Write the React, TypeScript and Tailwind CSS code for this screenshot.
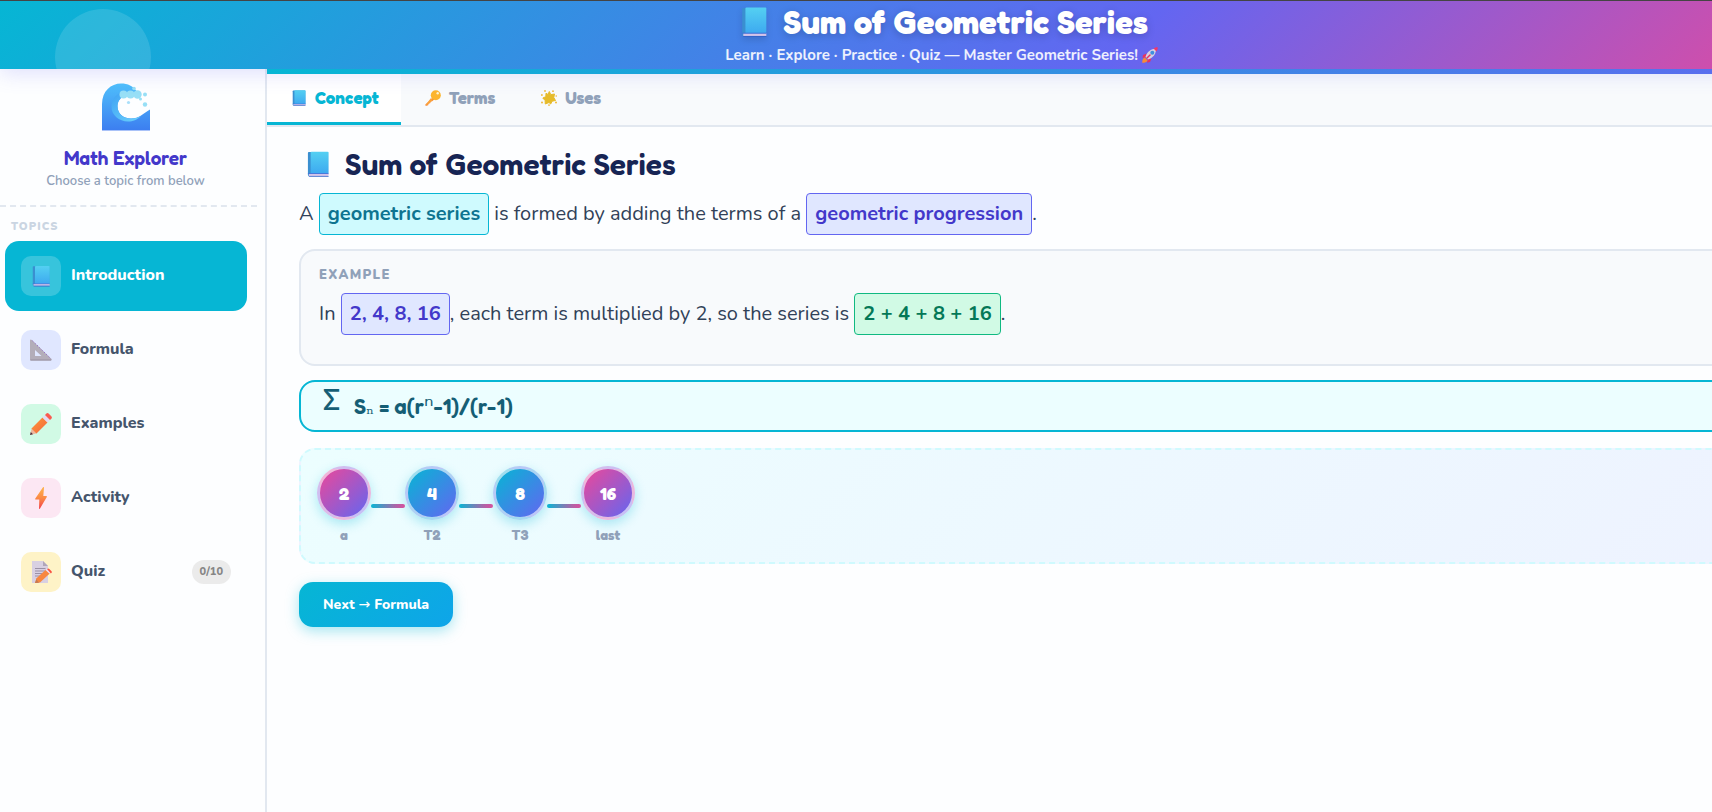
import type { ReactNode } from "react";

const display = "font-['Fredoka_One','Fredoka','Lato',sans-serif]";

function Book({ className = "" }: { className?: string }) {
  return (
    <svg viewBox="0 0 24 28" className={className} aria-hidden="true">
      <defs>
        <linearGradient id="bookCover" x1="0" y1="0" x2="0" y2="1">
          <stop offset="0" stopColor="#54d0f2" />
          <stop offset="1" stopColor="#3da9f0" />
        </linearGradient>
      </defs>
      <rect x="1" y="1" width="22" height="26" rx="1" fill="#3a8fd0" />
      <rect x="4" y="0.5" width="19.5" height="24" rx="1" fill="url(#bookCover)" />
      <path d="M2 24.500h21.500v2.500H2z" fill="#d5c3ea" />
      <path d="M1.500 27h22v1h-21z" fill="#3464c8" />
      <path d="M1 24h22.500v.9H1z" fill="#3f6fd8" />
    </svg>
  );
}

function Wave({ className = "" }: { className?: string }) {
  return (
    <svg viewBox="0 0 48 48" className={className} aria-hidden="true">
      <defs>
        <linearGradient id="waveBody" x1="0" y1="0" x2="0" y2="1">
          <stop offset="0" stopColor="#4fc0fb" />
          <stop offset="1" stopColor="#3c7df0" />
        </linearGradient>
        <linearGradient id="waveCurl" x1="0" y1="0" x2="1" y2="1">
          <stop offset="0" stopColor="#3fa2f3" />
          <stop offset="1" stopColor="#6bd2fc" />
        </linearGradient>
      </defs>
      <path d="M0 48V21C0 8 9 .5 19 .5c7 0 12 2.500 15.500 7.500L31 12c-3-1-6-1-8 0-4.500 2-7.500 6-7.500 11C15.500 30.500 21 35.500 29 35.500c8 0 12.500-5 19-9V48z" fill="url(#waveBody)" />
      <path d="M20 9c-7 2.500-10.500 8-10.500 15C9.500 32 17 38.500 26 38.500c5 0 9-1.500 13-5.500-3 1.700-6 2.500-10 2.500-8.500 0-13.500-5-13.500-12.500 0-4 2-7 5.500-9.500z" fill="url(#waveCurl)" />
      <path d="M0 47h48v1H0z" fill="#a9c2f8" />
      <g fill="#97dff6">
        <circle cx="21.500" cy="11.500" r="4" />
        <circle cx="28.500" cy="11.500" r="4" />
        <circle cx="35.500" cy="11.500" r="4.200" />
        <circle cx="32" cy="5.500" r="1.800" />
        <circle cx="38.500" cy="16" r="1.500" />
        <circle cx="43" cy="11.500" r="2" />
        <circle cx="43" cy="21.500" r="2.200" />
      </g>
      <circle cx="26.500" cy="19.500" r="1.600" fill="#a8dffa" />
    </svg>
  );
}

function Ruler() {
  return (
    <svg viewBox="0 0 22 22" className="size-[22px]" aria-hidden="true">
      <path fillRule="evenodd" d="M0 1.500C0 .3 1 .2 1.800 1L21.500 20c.7.800.4 1.500-.5 1.500H1c-.6 0-1-.4-1-1zM5 11v6h6.500z" fill="#b3adb9" />
      <path d="M2.500 1.800l18.500 18" stroke="#8d62c4" strokeWidth="1" strokeDasharray="1.200 2" />
      <path d="M.5 21h20.500" stroke="#968fa0" />
    </svg>
  );
}

function Pencil() {
  return (
    <svg viewBox="0 0 22 22" className="size-[22px]" aria-hidden="true">
      <defs>
        <linearGradient id="pencilBody" x1="0" y1="0" x2="1" y2="1">
          <stop offset="0" stopColor="#ff9838" />
          <stop offset="1" stopColor="#f2663f" />
        </linearGradient>
      </defs>
      <path d="M0 22l1.800-7L7 20.300z" fill="#eeb69c" />
      <path d="M0 22l.8-3 2.200 2.200z" fill="#4a3340" />
      <path d="M1.500 15.500L12.500 4.500l5 5L6.500 20.500z" fill="url(#pencilBody)" />
      <path d="M12.500 4.500L15 2l5 5-2.500 2.500z" fill="#e5d9f2" />
      <path d="M15 2l1.200-1.300c.8-.8 1.800-.8 2.600 0l2.500 2.500c.8.800.8 1.800 0 2.600L20 7z" fill="#fa5a50" />
    </svg>
  );
}

function Bolt() {
  return (
    <svg viewBox="0 0 12 22" className="h-[22px] w-3" aria-hidden="true">
      <defs>
        <linearGradient id="boltFill" x1="0" y1="0" x2="0" y2="1">
          <stop offset="0" stopColor="#fdb44b" />
          <stop offset=".5" stopColor="#fb8a45" />
          <stop offset="1" stopColor="#f2404b" />
        </linearGradient>
      </defs>
      <path d="M8 .3L.3 11.500c-.4.600 0 1 .5 1h3.500L4 21.500c0 .6.600.7 1 .1L11.800 10c.3-.6 0-1-.6-1H8.300L9 .7C9 0 8.400-.2 8 .3z" fill="url(#boltFill)" />
    </svg>
  );
}

function Memo() {
  return (
    <svg viewBox="0 0 22 22" className="size-[22px]" aria-hidden="true">
      <path d="M2 0h11l5 5v17H2z" fill="#d8d0e2" />
      <path d="M13 0l5 5h-5z" fill="#b0a6ba" />
      <path d="M5 7.500h10.500M5 10h10.500M5 12.500h8M5 15h6" stroke="#9a90a6" strokeWidth="1" />
      <path d="M5 22l1.500-4.800L16 8.500l4 3.800L10 21.500z" fill="#f7873f" />
      <path d="M15.500 9l1.600-1.500 4 3.800-1.600 1.500z" fill="#ece3f5" />
      <path d="M17 8c.8-.7 1.600-.7 2.300 0l2 1.900c.7.700.7 1.500 0 2.200l-.4.300z" fill="#f9503f" />
      <path d="M5 22l1.300-3.800 2.700 3.500z" fill="#c47a52" />
    </svg>
  );
}

function Key() {
  return (
    <svg viewBox="0 0 16 16" className="size-4" aria-hidden="true">
      <path d="M8 7.500L.6 14.200c-.6.800-.2 1.800.8 1.600l1.800-.5.400-1.800 1.600-.2.400-1.800 1.600-.2 2.600-2.300z" fill="#f58a3c" />
      <circle cx="10.800" cy="5.200" r="5" fill="#fcb52e" />
      <path d="M6 8l2 2-6.500 5.500-.7-.7z" fill="#fba23b" />
      <circle cx="12.700" cy="3.300" r="1.200" fill="#fff3cf" />
    </svg>
  );
}

function Star() {
  return (
    <svg viewBox="0 0 16 16" className="size-4" aria-hidden="true">
      <path d="M8.300 1.500l1.500 3.200 3.700-.7-.7 3.500 1.700 3-3.400.7-1.400 2.800L8 12.500 4.300 14l-.2-3.500L1.800 8l3-1.300L5 3.200l2 1.300z" fill="#e6bb2a" stroke="#e6bb2a" strokeWidth="1" strokeLinejoin="round" />
      <g fill="#efb93a">
        <circle cx="4" cy="1" r=".9" />
        <circle cx="12" cy="1.200" r=".9" />
        <circle cx=".9" cy="5" r=".9" />
        <circle cx="15.200" cy="6" r=".8" />
        <circle cx="1" cy="12.500" r="1" />
        <circle cx="15" cy="12.500" r="1" />
        <circle cx="8" cy="15.100" r=".9" />
      </g>
    </svg>
  );
}

function Rocket() {
  return (
    <svg viewBox="0 0 16 16" className="size-4" aria-hidden="true">
      <path d="M4.500 6.500L1 8l-.5 3 4-.8zM9.500 11.500L8 15l-3 .8.800-4z" fill="#e8335f" />
      <path d="M2.800 10.500C1 11 .2 13 .2 15.800c2.800 0 4.800-.8 5.300-2.600z" fill="#f98a35" />
      <path d="M3.500 10C5 4.500 9.500 1.500 14 1.800 14.300 6.300 11.500 11 6 12.500z" fill="#d5cfe4" />
      <path d="M11.500 1.500C13 .5 15 0 15.700.3c.3.700-.2 2.700-1.200 4.200z" fill="#f1366b" />
      <circle cx="10.300" cy="5.700" r="2" fill="#3f8fe0" />
      <path d="M5 11l3-3" stroke="#e8335f" strokeWidth="1.500" strokeLinecap="round" />
    </svg>
  );
}

const topics: { label: string; icon: ReactNode; tile: string; badge?: string; active?: boolean }[] = [
  { label: "Introduction", icon: <Book className="h-[22px] w-[18px]" />, tile: "bg-white/20", active: true },
  { label: "Formula", icon: <Ruler />, tile: "bg-indigo-100" },
  { label: "Examples", icon: <Pencil />, tile: "bg-[#d1fae5]" },
  { label: "Activity", icon: <Bolt />, tile: "bg-[#fce7f3]" },
  { label: "Quiz", icon: <Memo />, tile: "bg-[#fef3c7]", badge: "0/10" },
];

const tabs: { label: string; icon: ReactNode; active?: boolean }[] = [
  { label: "Concept", icon: <Book className="h-4 w-4" />, active: true },
  { label: "Terms", icon: <Key /> },
  { label: "Uses", icon: <Star /> },
];

const terms = [
  { value: "2", label: "a", end: true },
  { value: "4", label: "T2", end: false },
  { value: "8", label: "T3", end: false },
  { value: "16", label: "last", end: true },
];

function Tag({ tone, children }: { tone: string; children: ReactNode }) {
  return (
    <strong className={`inline-block rounded-sm border px-2 text-center leading-10 font-bold ${tone}`}>{children}</strong>
  );
}

export default function App() {
  return (
    <div className="min-h-screen w-full overflow-x-hidden bg-[#fdfeff] font-['Nunito','Lato',sans-serif] text-slate-700">
      <div className="flex min-h-screen w-[110%] flex-col">
        <header className="relative z-10 h-[69px] border-t border-[#444] bg-[linear-gradient(135deg,#06b6d4,#6366f1_60%,#ec4899)] text-center text-white shadow-[0_4px_20px_rgba(99,102,241,0.2)]">
          <div className="absolute inset-0 overflow-hidden">
            <div className="absolute top-2 left-[55px] size-24 rounded-full bg-white/12" />
          </div>
          <h1 className={`relative flex items-center justify-center gap-4 pt-0.5 pl-1.5 text-[33px] leading-[38px] font-bold text-shadow-[0_2px_8px_rgba(0,0,0,0.2)] ${display}`}>
            <Book className="h-[30px] w-[26px] drop-shadow-md" />
            Sum of Geometric Series
          </h1>
          <p className="relative flex items-center justify-center gap-1 pt-0.5 text-[15px] leading-6 font-bold text-white/90">
            Learn · Explore · Practice · Quiz — Master Geometric Series! <Rocket />
          </p>
        </header>

        <div className="flex grow">
          <aside className="w-[267px] shrink-0 border-r-2 border-slate-200">
            <div className="mr-2 flex flex-col items-center border-b-2 border-dashed border-slate-200 pt-3.5 pr-1.5 pb-[13px]">
              <Wave className="size-12" />
              <h2 className={`mt-[15px] text-[19px] leading-6 font-semibold text-[#4338ca] ${display}`}>Math Explorer</h2>
              <p className="text-[13px] leading-[22px] font-semibold text-slate-400">Choose a topic from below</p>
            </div>
            <nav aria-label="Topics" className="pr-[18px] pl-[5px]">
              <p className="px-1.5 pt-[11px] pb-[5px] text-[11px] leading-[18px] font-black tracking-widest text-slate-300">TOPICS</p>
              <ul className="flex flex-col gap-1">
                {topics.map((t) => (
                  <li key={t.label}>
                    <button
                      type="button"
                      className={`flex h-[70px] w-full items-center gap-2.5 rounded-[14px] px-4 text-left text-base font-extrabold ${t.active ? "bg-[#06b6d4] text-white" : "text-slate-600"}`}
                    >
                      <span className={`flex size-10 items-center justify-center rounded-[10px] ${t.tile}`}>{t.icon}</span>
                      <span className="grow pb-0.5">{t.label}</span>
                      {t.badge && (
                        <span className="rounded-full bg-[#ebebeb] px-2 text-[11px] leading-6 font-extrabold text-[#858585]">{t.badge}</span>
                      )}
                    </button>
                  </li>
                ))}
              </ul>
            </nav>
          </aside>

          <main className="min-w-0 grow">
            <div className="relative z-20 h-[5px] bg-[linear-gradient(90deg,#06b6d4,#6366f1)]" />
            <div role="tablist" className="flex border-b-2 border-slate-200 bg-slate-50">
              {tabs.map((t) => (
                <button
                  key={t.label}
                  type="button"
                  role="tab"
                  aria-selected={!!t.active}
                  className={`flex items-center gap-2 border-b-[3px] py-4 pr-[22px] pl-6 text-[17px] leading-4 font-bold ${display} ${t.active ? "border-[#06b6d4] bg-white text-[#06b6d4]" : "border-transparent text-slate-400"}`}
                >
                  {t.icon}
                  {t.label}
                </button>
              ))}
            </div>

            <div className="px-8 pt-[19px]">
              <h2 className={`flex items-center gap-4 pl-2 text-[30px] leading-9 font-semibold text-[#172554] ${display}`}>
                <Book className="h-7 w-[22px]" />
                Sum of Geometric Series
              </h2>
              <p className="mt-[11px] text-xl leading-[42px]">
                A <Tag tone="border-[#06b6d4] bg-[#cffafe] text-[#0e7490]">geometric series</Tag> is formed by adding the terms of a{" "}
                <Tag tone="border-[#6366f1] bg-indigo-100 text-[#4338ca]">geometric progression</Tag>.
              </p>

              <section className="mt-3.5 rounded-2xl border-2 border-slate-200 bg-slate-50 px-[18px] pt-[13px] pb-[29px]">
                <h3 className="mb-[7px] text-[13px] leading-[22px] font-black tracking-widest text-slate-400">EXAMPLE</h3>
                <p className="text-xl leading-[42px]">
                  In <Tag tone="border-[#6366f1] bg-indigo-100 text-[#4338ca]">2, 4, 8, 16</Tag>, each term is multiplied by 2, so the series is{" "}
                  <Tag tone="border-[#10b981] bg-[#d1fae5] text-[#047857]">2 + 4 + 8 + 16</Tag>.
                </p>
              </section>

              <div className={`mt-3.5 flex h-[52px] gap-3.5 rounded-2xl border-2 border-[#06b6d4] bg-[#ecfeff] px-[22px] text-[22px] font-semibold text-[#155e75] ${display}`}>
                <span className="pt-0.5 text-[28px] leading-8">Σ</span>
                <span className="pt-2 leading-8">
                  S<span className="font-['DejaVu_Serif',serif] text-lg leading-4 font-normal">ₙ</span> = a(r<span className="font-['DejaVu_Sans',sans-serif] text-2xl leading-4 font-normal">ⁿ</span>-1)/(r-1)
                </span>
              </div>

              <div className="mt-4 flex items-center rounded-2xl border-2 border-dashed border-[#cffafe] bg-[linear-gradient(135deg,#ecfeff,#eef2ff)] px-4 pt-4 pb-5">
                {terms.map((t, i) => (
                  <div key={t.label} className="flex items-center">
                    {i > 0 && <span className="mt-1 h-1 w-[34px] rounded-sm bg-[linear-gradient(90deg,#06b6d4,#ec4899)]" />}
                    <div className={`flex w-[54px] flex-col items-center gap-2 font-bold ${display}`}>
                      <span
                        className={`flex size-[54px] items-center justify-center rounded-full border-3 border-white/60 text-lg text-white shadow-[0_4px_12px_rgba(6,182,212,0.3)] ${t.end ? "bg-[linear-gradient(135deg,#ec4899,#6366f1)]" : "bg-[linear-gradient(135deg,#06b6d4,#6366f1)]"}`}
                      >
                        {t.value}
                      </span>
                      <span className="text-sm leading-[14px] text-slate-400">{t.label}</span>
                    </div>
                  </div>
                ))}
              </div>

              <button
                type="button"
                className="mt-[18px] rounded-[14px] bg-[linear-gradient(135deg,#06b6d4,#0ea5e9)] px-6 text-sm leading-[45px] font-extrabold text-white shadow-[0_4px_14px_rgba(6,182,212,0.35)]"
              >
                Next <span className="font-['DejaVu_Sans',sans-serif] font-normal">→</span> Formula
              </button>
            </div>
          </main>
        </div>
      </div>
    </div>
  );
}
